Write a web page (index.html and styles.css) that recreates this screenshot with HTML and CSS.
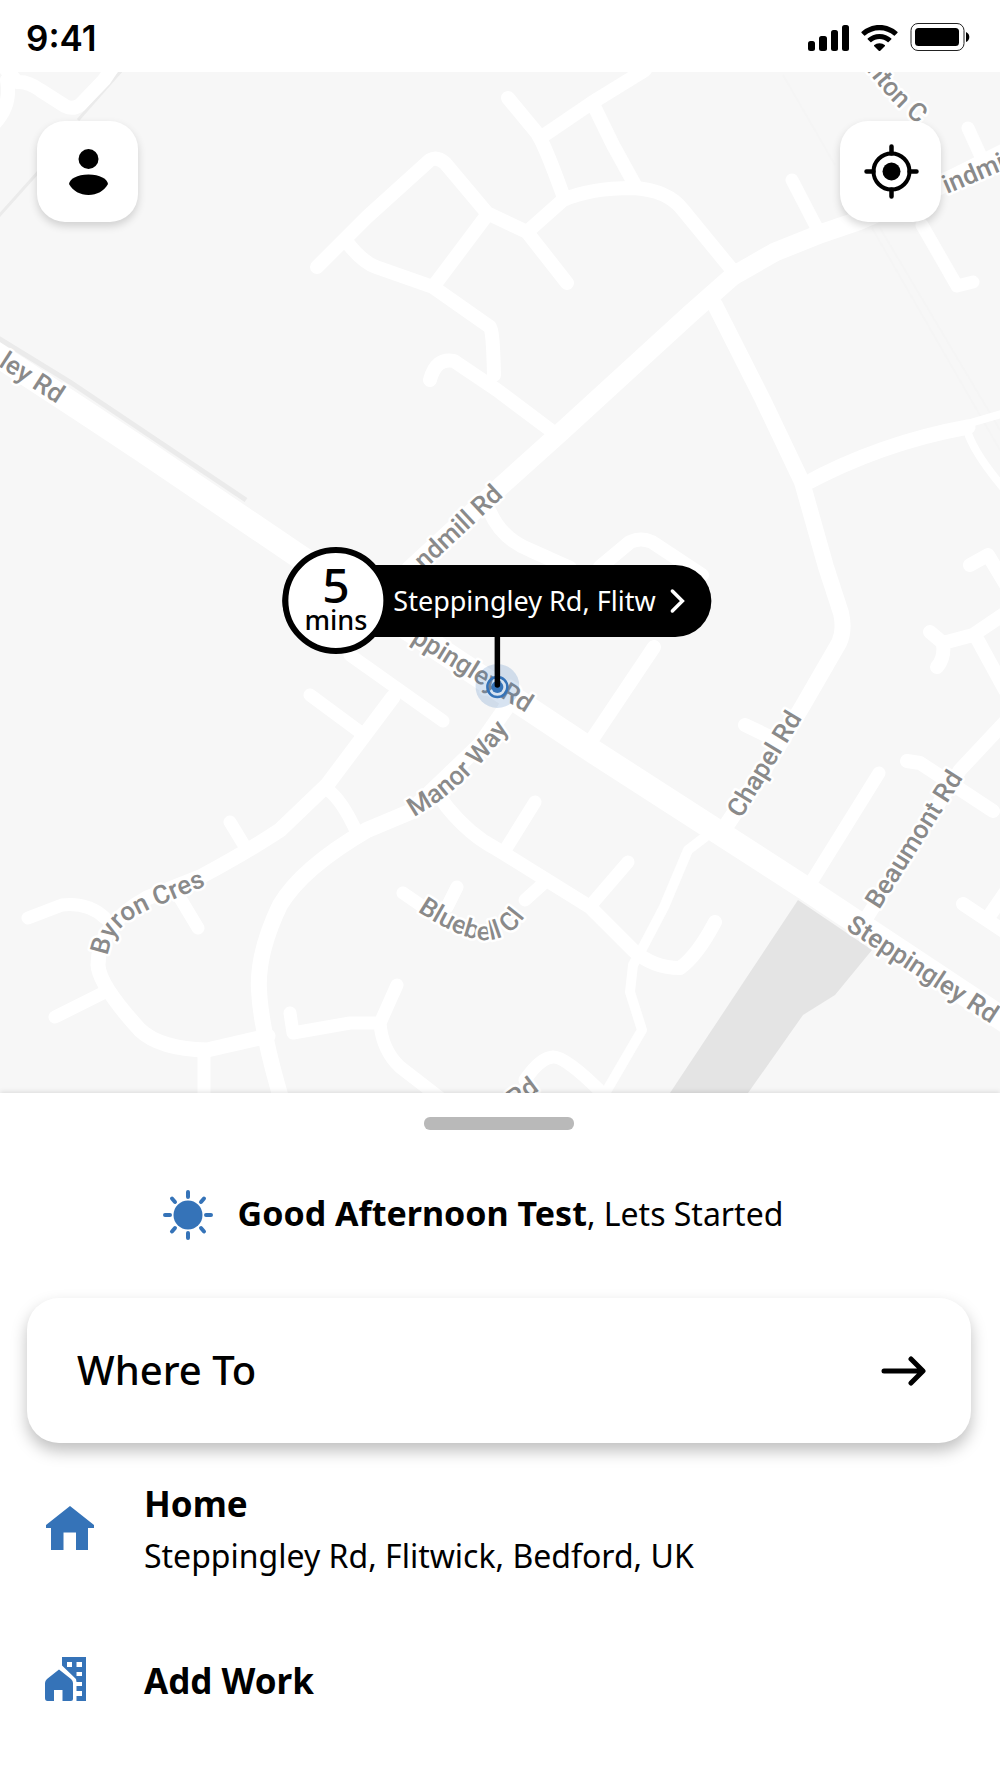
FILE: index.html
```html
<!DOCTYPE html>
<html lang="en">
<head>
<meta charset="utf-8">
<meta name="viewport" content="width=device-width, initial-scale=1">
<title>Where To</title>
<link rel="stylesheet" href="styles.css">
</head>
<body>
<div class="app">
  <header class="status">
    <time class="status-time">9:41</time>
    <div class="status-icons" role="img" aria-label="Signal, Wi-Fi and battery full">
      <svg width="41" height="28" viewBox="0 0 41 28">
        <rect x="0" y="18" width="7" height="10" rx="2.5"/>
        <rect x="11" y="13" width="8" height="15" rx="2.5"/>
        <rect x="23" y="7" width="7" height="21" rx="2.5"/>
        <rect x="34" y="2" width="7" height="26" rx="2.5"/>
      </svg>
      <svg width="37" height="28" viewBox="0 -1 37 28">
        <path d="M18.500 1C25.600 1 32 3.700 36.600 8L36.600 8.800L33.800 11.600Q33.400 12 32.900 11.600C29 8.100 24.100 6.200 18.500 6.200S8 8.100 4.100 11.600Q3.600 12 3.200 11.600L.4 8.800L.4 8C5 3.700 11.400 1 18.500 1Z"/>
        <path d="M18.500 10C23.200 10 27.300 11.700 30.400 14.600L30.400 15.300L27.600 18Q27.100 18.500 26.600 18C24.300 16.100 21.600 15.100 18.500 15.100S12.700 16.100 10.400 18Q9.900 18.500 9.400 18L6.600 15.300L6.600 14.600C9.700 11.700 13.800 10 18.500 10Z"/>
        <path d="M18.500 19.200C20.600 19.200 22.500 19.900 24 21.200L24 22L19 27Q18.500 27.500 18 27L13 22L13 21.200C14.500 19.900 16.400 19.200 18.500 19.200Z"/>
      </svg>
      <svg width="60" height="28" viewBox="0 0 60 28">
        <rect x="1" y=".5" width="53" height="27" rx="7" fill="none" stroke="#222"/>
        <rect x="5" y="5" width="44" height="18" rx="3.500"/>
        <path d="M56 9Q59.300 10.500 59.300 14T56 19Z"/>
      </svg>
    </div>
  </header>

  <main class="map">
    <svg class="map-canvas" viewBox="0 72 1000 1021" preserveAspectRatio="xMidYMid slice" role="img" aria-label="Map around Steppingley Rd, Flitwick">
      <defs>
        <path id="l-west" d="M-50 335L57 404"/>
        <path id="l-close" d="M866 70L890 99L903 112L940 143"/>
        <path id="l-windmill-ne" d="M947 194L1060 146"/>
        <path id="l-windmill" d="M385 607L504 496"/>
        <path id="l-centre" d="M340 598L526 713"/>
        <path id="l-manor" d="M414 817Q475 784 524 706"/>
        <path id="l-byron" d="M108 956C111 930 130 918 150 909L215 882"/>
        <path id="l-bluebell" d="M417 911Q455 936 480 940Q505 942 520 923L554 880"/>
        <path id="l-chapel" d="M741 819L825 681"/>
        <path id="l-beaumont" d="M879 910L985 744"/>
        <path id="l-east" d="M845 929L1040 1056"/>
        <path id="l-south" d="M468 1144L540 1090"/>
      </defs>
      <rect x="0" y="72" width="1000" height="1021" fill="#f7f7f7"/>
      <path class="park" d="M798 900L872 950L835 995L803 1015L748 1093H670Z"/>
      <g class="boundary">
        <path d="M122 70L78 120M40 170L-2 217"/>
        <path class="boundary-wide" d="M-2 338L70 382L246 500"/>
        <path class="boundary-faint" d="M783 75L835 165M872 228L1000 450M880 228L1000 430"/>
      </g>
      <g class="road">
        <path class="r14" d="M5 68L17 82Q28 81 40 90L65 106Q73 110 80 105L104 80L114 65M7 80Q12 105 -6 124"/>
        <path class="r24" d="M-10 350L80 409L142 450L300 557L594 752L805 888L1010 1024"/>
        <path class="r19" d="M1010 150L930 190L858 221L820 234L775 252L733 276L690 314L560 433L500 487L410 570"/>
        <path class="r16" d="M715 305L763 400L802 482L826 567L841 613Q845 630 839 643L802 707L770 760L722 832"/>
        <path class="r15" d="M803 485Q880 443 968 427"/>
        <path class="r8" d="M967 424L1005 413M967 430Q973 452 1005 490"/>
        <path class="r14" d="M508 98L537 133Q545 145 563 195M527 232L563 200Q590 188 633 188Q668 190 683 210L733 271"/>
        <path class="r14" d="M543 136L593 102L645 70M593 104L613 145L635 185"/>
        <path class="r14" d="M317 267L367 217L430 160Q437 156 445 163L487 213L527 232L567 283"/>
        <path class="r14" d="M346 241Q362 262 376 267L433 287L490 327Q493 330 494 375M487 215L433 287M430 380Q436 357 454 361L497 390L553 432"/>
        <path class="r13" d="M792 180L820 234M968 128L988 172M922 225L957 286L973 282"/>
        <path class="r14" d="M490 512Q502 539 530 550L570 568M600 567L630 542Q641 537 652 542L702 575"/>
        <path class="r14" d="M654 647L593 738M970 565L988 555L1006 585M1004 614L973 635L943 643L930 632M943 643Q945 658 937 667M975 635L1005 690M745 725L770 737"/>
        <path class="r14" d="M1005 722L960 770L862 925M907 761L920 763L993 811M963 904L1005 932M990 915L1005 893"/>
        <path class="r13" d="M879 773L810 884M310 695L360 732M350 655L443 721"/>
        <path class="r15" d="M393 697L327 785L280 830Q250 850 200 877L147 898Q98 925 98 965Q99 985 140 1030Q160 1049 207 1050L268 1036"/>
        <path class="r13" d="M28 918L62 905Q88 902 105 918M55 1017L103 993M204 1050V1098M230 822L247 850M180 898L198 928M328 790Q342 800 357 833"/>
        <path class="r16" d="M508 705L480 745L410 812L367 830Q302 868 280 905Q257 953 259 990Q261 1030 281 1098"/>
        <path class="r14" d="M440 797L447 807Q470 835 495 848L590 907L633 950Q653 968 680 968Q697 956 715 922"/>
        <path class="r13" d="M535 802L507 847M628 862L591 905M545 882L525 900M403 893L435 915M457 887L447 907"/>
        <path class="r13" d="M290 1013L293 1033L350 1023H380L397 985M380 1023Q382 1050 400 1067L440 1098M525 1080Q540 1058 553 1057T606 1097"/>
        <path class="r10" d="M705 837L688 850L664 907L643 947L633 965L630 992L642 1030L603 1097"/>
      </g>
      <g class="label">
        <text text-anchor="end"><textPath href="#l-west" startOffset="100%">ley Rd</textPath></text>
        <text><textPath href="#l-close">nton C</textPath></text>
        <text><textPath href="#l-windmill-ne">indmi</textPath></text>
        <text text-anchor="end"><textPath href="#l-windmill" startOffset="100%">ndmill Rd</textPath></text>
        <text text-anchor="end"><textPath href="#l-centre" startOffset="100%">ppingley Rd</textPath></text>
        <text><textPath href="#l-manor">Manor Way</textPath></text>
        <text><textPath href="#l-byron">Byron Cres</textPath></text>
        <text><textPath href="#l-bluebell">Bluebell Cl</textPath></text>
        <text><textPath href="#l-chapel">Chapel Rd</textPath></text>
        <text><textPath href="#l-beaumont">Beaumont Rd</textPath></text>
        <text><textPath href="#l-east">Steppingley Rd</textPath></text>
        <text text-anchor="end"><textPath href="#l-south" startOffset="100%">Rd</textPath></text>
      </g>
    </svg>

    <div class="map-controls">
      <button class="map-button" type="button" aria-label="Profile">
        <svg width="56" height="56" viewBox="0 0 56 56">
          <circle cx="28.500" cy="15" r="10"/>
          <path d="M9 40C9.500 35 17 30.500 28.500 30.500S47.500 35 48 40C44 47 37 51 28.500 51S13 47 9 40Z"/>
        </svg>
      </button>
      <button class="map-button" type="button" aria-label="Centre on my location">
        <svg width="56" height="56" viewBox="0 0 56 56">
          <circle cx="28.500" cy="27.500" r="9"/>
          <circle cx="28.500" cy="27.500" r="18" fill="none" stroke="#000" stroke-width="4"/>
          <path d="M28.500 2.500V9.500M28.500 45.500V52.500M3.500 27.500H10.500M46.500 27.500H53.500" stroke="#000" stroke-width="4.500" stroke-linecap="round"/>
        </svg>
      </button>
    </div>

    <div class="pin">
      <button class="callout" type="button">
        <span class="eta"><span class="eta-value">5</span><span class="eta-unit">mins</span></span>
        <span class="callout-text">Steppingley Rd, Flitw</span>
        <svg width="16" height="26" viewBox="0 0 16 26"><path d="M3 3L13 13L3 23" fill="none" stroke="#fff" stroke-width="3.500" stroke-linecap="round"/></svg>
      </button>
      <svg class="pin-marker" width="44" height="72" viewBox="0 0 44 72">
        <circle cx="22" cy="49" r="22" fill="#3573b8" fill-opacity=".2"/>
        <circle cx="22" cy="50" r="10" fill="none" stroke="#3573b8" stroke-width="2.500"/>
        <circle cx="22" cy="50" r="6" fill="#3573b8"/>
        <path d="M22 -2V48" stroke="#000" stroke-width="5.500" stroke-linecap="round"/>
      </svg>
    </div>
  </main>

  <section class="sheet">
    <div class="handle"></div>
    <p class="greeting">
      <svg width="50" height="50" viewBox="0 0 50 50">
        <circle cx="25" cy="25" r="14.500"/>
        <path d="M25 2V7M25 43V48M2 25H7M43 25H48M9 8.500L12 12M38 38L41 41.500M41 8.500L38 12M12 38L9 41.500" stroke="#3573b8" stroke-width="4" stroke-linecap="round"/>
      </svg>
      <span class="greeting-text"><b>Good Afternoon Test</b>, Lets Started</span>
    </p>
    <button class="where" type="button">
      <span>Where To</span>
      <svg width="46" height="32" viewBox="0 0 46 32"><path d="M4 16H42M31 4L43 16L31 28" fill="none" stroke="#000" stroke-width="5" stroke-linecap="round" stroke-linejoin="round"/></svg>
    </button>
    <ul class="places">
      <li>
        <a class="place" href="#home">
          <svg width="50" height="50" viewBox="0 0 50 50"><path d="M25 1L49 20V23H43V45H31V27.500H18.500V45H6V23H1V20Z"/></svg>
          <span class="place-text"><b>Home</b><span>Steppingley Rd, Flitwick, Bedford, UK</span></span>
        </a>
      </li>
      <li>
        <a class="place" href="#work">
          <svg width="50" height="50" viewBox="0 0 50 50">
            <path d="M14 13.500L26 23Q28 25 28 27V43Q28 45 26 45H17.500V34H9V45H2.500Q0 45 0 42V27Q0 25 2 23Z"/>
            <path fill-rule="evenodd" d="M17 1H41V45H31.500V40H37V35H31.500V30H37V26H31.500L31 23L17 9.500ZM22 6V11H27V6ZM31.500 6V11H37V6ZM31.500 16V20H37V16Z"/>
          </svg>
          <span class="place-text"><b>Add Work</b></span>
        </a>
      </li>
    </ul>
  </section>
</div>
</body>
</html>
```

FILE: styles.css
```css
* { box-sizing: border-box; }

body {
  margin: 0;
  background: #fff;
  color: #000;
  font-family: "Noto Sans", "Open Sans", sans-serif;
}

button {
  border: 0;
  padding: 0;
  color: inherit;
  font: inherit;
  cursor: pointer;
}

svg { display: block; flex: none; }

.app {
  display: flex;
  flex-direction: column;
  min-height: 100vh;
}

.status {
  display: flex;
  justify-content: space-between;
  align-items: center;
  height: 72px;
  padding: 4px 30px 0 26px;
}
.status-time {
  font: 600 35px/40px Inter, "Liberation Sans", sans-serif;
}
.status-icons {
  display: flex;
  gap: 12px;
  padding-bottom: 2px;
}

.map {
  position: relative;
  flex: 1;
  min-height: 800px;
  overflow: hidden;
  background: #f7f7f7;
}
.map-canvas {
  position: absolute;
  inset: 0;
  width: 100%;
  height: 100%;
}
.park { fill: #e4e4e4; }
.boundary { fill: none; stroke: #ebebeb; stroke-width: 3; }
.boundary-wide { stroke-width: 5; }
.boundary-faint { stroke: #f5f5f5; stroke-width: 2; }
.road {
  fill: none;
  stroke: #fff;
  stroke-linecap: round;
  stroke-linejoin: round;
}
.r8 { stroke-width: 8; }
.r10 { stroke-width: 10; }
.r13 { stroke-width: 13; }
.r14 { stroke-width: 14; }
.r15 { stroke-width: 15; }
.r16 { stroke-width: 16; }
.r19 { stroke-width: 19; }
.r24 { stroke-width: 24; }
.label {
  font-family: Roboto, sans-serif;
  font-size: 26px;
  font-weight: 500;
  fill: #8a8a8a;
  stroke: #fff;
  stroke-width: 5;
  stroke-linejoin: round;
  paint-order: stroke;
}

.map-controls {
  position: relative;
  display: flex;
  justify-content: space-between;
  padding: 49px 59px 0 37px;
}
.map-button {
  display: grid;
  place-items: center;
  width: 101px;
  height: 101px;
  border-radius: 28px;
  background: #fff;
  box-shadow: 0 4px 8px rgba(0, 0, 0, .16);
}

.pin {
  position: absolute;
  left: calc(50% - 3px);
  top: calc(60% + 24px);
  display: flex;
  flex-direction: column;
  align-items: center;
  transform: translate(-50%, -100%);
}
.callout {
  display: flex;
  align-items: center;
  height: 72px;
  padding-right: 26px;
  border-radius: 36px;
  background: #000;
  color: #fff;
  white-space: nowrap;
}
.eta {
  display: flex;
  flex-direction: column;
  align-items: center;
  flex: none;
  width: 107px;
  height: 107px;
  padding-top: 12px;
  border: 6px solid #000;
  border-radius: 50%;
  background: #fff;
  color: #000;
  font-weight: 500;
}
.eta-value { font-size: 48px; line-height: 40px; }
.eta-unit { font-size: 27px; line-height: 30px; }
.callout-text { margin: 0 14px 0 4px; font-size: 27px; }

.sheet {
  position: relative;
  padding: 24px 29px 45px 27px;
  background: #fff;
  box-shadow: 0 -1px 5px rgba(0, 0, 0, .12);
}
.handle {
  width: 150px;
  height: 13px;
  margin: 0 auto;
  border-radius: 6px;
  background: #b9b9b9;
}
.greeting {
  display: flex;
  justify-content: center;
  align-items: center;
  gap: 25px;
  height: 50px;
  margin: 60px 0 58px;
  padding-right: 52px;
  font-size: 32px;
}
.greeting-text { line-height: 46px; padding-bottom: 4px; }
.greeting b { font-size: 34px; }
.greeting svg, .place svg { fill: #3573b8; }
.where {
  display: flex;
  justify-content: space-between;
  align-items: center;
  width: 100%;
  height: 145px;
  padding: 0 45px 0 50px;
  border-radius: 32px;
  background: #fff;
  box-shadow: 0 8px 16px rgba(0, 0, 0, .25);
  font-size: 40px;
  font-weight: 500;
}
.where span { padding-bottom: 3px; }
.places {
  display: grid;
  gap: 47px;
  margin: 35px 0 0;
  padding: 0 18px;
  list-style: none;
}
.place {
  display: flex;
  align-items: center;
  gap: 49px;
  min-height: 104px;
  color: #000;
  font-size: 32px;
  line-height: 52px;
  text-decoration: none;
}
.place-text { display: grid; }
.place-text b { font-size: 35px; }
```
